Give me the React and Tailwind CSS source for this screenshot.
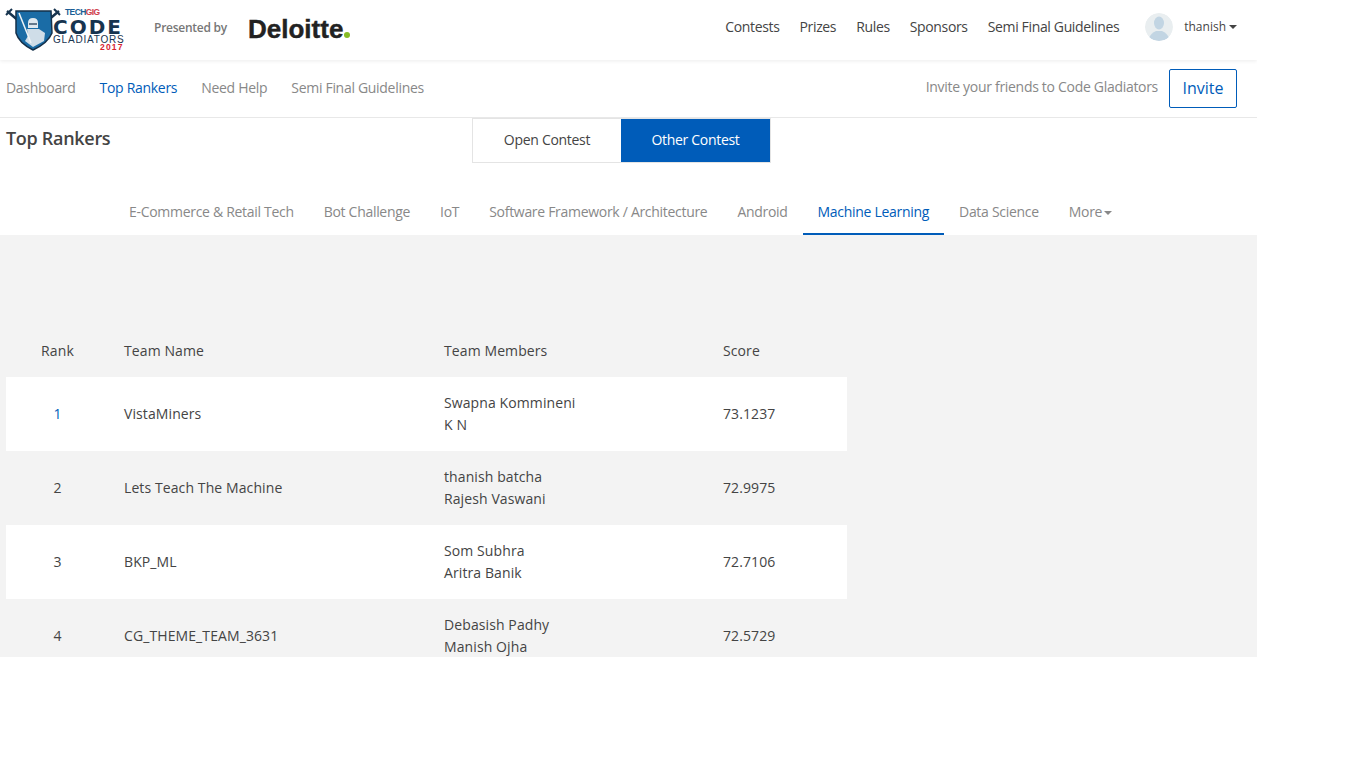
const mainNav = ['Contests', 'Prizes', 'Rules', 'Sponsors', 'Semi Final Guidelines'];
const subNav = ['Dashboard', 'Top Rankers', 'Need Help', 'Semi Final Guidelines'];
const tabs = ['E-Commerce & Retail Tech', 'Bot Challenge', 'IoT', 'Software Framework / Architecture', 'Android', 'Machine Learning', 'Data Science'];
const teams = [
  { rank: 1, name: 'VistaMiners', members: ['Swapna Kommineni', 'K N'], score: '73.1237' },
  { rank: 2, name: 'Lets Teach The Machine', members: ['thanish batcha', 'Rajesh Vaswani'], score: '72.9975' },
  { rank: 3, name: 'BKP_ML', members: ['Som Subhra', 'Aritra Banik'], score: '72.7106' },
  { rank: 4, name: 'CG_THEME_TEAM_3631', members: ['Debasish Padhy', 'Manish Ojha'], score: '72.5729' },
];

function Logo() {
  return (
    <div className="relative w-[130px] h-[52px] self-start font-['Liberation_Sans',sans-serif]">
      <svg className="absolute left-0 top-0" width="64" height="52" viewBox="0 0 64 52">
        {/* crossed swords behind the shield */}
        <path d="M7 11 L20 22 M59 11 L46 22" stroke="#17344f" strokeWidth="2.5" />
        <path d="M6 15 L12 9 M60 15 L54 9" stroke="#17344f" strokeWidth="2" />
        <path d="M16 11 L51 11 L52 33 Q48 43 33 50 Q19 43 16 33 Z" fill="#1a6ca6" stroke="#14304a" strokeWidth="1.5" />
        <path d="M28 23 Q28 18 33 18 Q38 18 38 23 L38 28 L28 28 Z" fill="#dfe8ef" />
        <path d="M27 29 L39 29 L45 33 L44 41 L33 47 L25 41 L28 36 Z" fill="#cfdde8" />
        <path d="M29 24 L37 24" stroke="#14304a" strokeWidth="1.2" />
        <path d="M19 13 L31 43" stroke="#eef3f6" strokeWidth="1.5" />
      </svg>
      <span className="absolute left-[65px] top-[8px] text-[8.5px] leading-[9px] font-bold tracking-[-0.6px] text-[#1b5f96]">TECH<span className="text-[#d0404c]">GIG</span></span>
      <span className="absolute left-[53px] top-[19px] text-[20px] leading-[16px] font-bold tracking-[2px] text-[#17344f] font-['DejaVu_Sans',sans-serif]">CODE</span>
      <span className="absolute left-[53px] top-[36px] text-[10px] leading-[8px] tracking-[0.8px] text-[#17344f]">GLADIATORS</span>
      <span className="absolute left-[100px] top-[44px] text-[8.5px] leading-[7px] font-bold tracking-[1.2px] text-[#d8232f]">2017</span>
    </div>
  );
}

function Avatar() {
  return (
    <svg width="28" height="28" viewBox="0 0 28 28" className="rounded-full">
      <circle cx="14" cy="14" r="14" fill="#e9eef0" />
      <ellipse cx="14" cy="10" rx="5" ry="6.5" fill="#c2d5e3" />
      <path d="M4 25 Q6 20 11 18 L17 18 Q22 20 24 25 Q14 31 4 25 Z" fill="#c2d5e3" />
    </svg>
  );
}

export default function App() {
  return (
    <div className="w-[1257px] h-[657px] overflow-hidden bg-[#f3f3f3] text-[#444] text-sm font-['Open_Sans',sans-serif]">
      <header className="h-[60px] bg-white flex items-center shadow-[0_1px_4px_rgba(0,0,0,0.08)] relative pb-[6px] tracking-[-0.35px]">
        <Logo />
        <span className="ml-[24px] mt-[2px] text-xs font-semibold tracking-[-0.25px] text-[#777]">Presented by</span>
        <span className="ml-[21px] mt-[4px] flex items-end text-[26px] leading-[30px] font-bold tracking-normal text-[#222] [-webkit-text-stroke:0.4px_#222] font-['Liberation_Sans',sans-serif]">
          Deloitte
          <span className="w-[6px] h-[6px] mb-[6px] ml-[1px] rounded-full bg-[#86bc25]" />
        </span>
        <nav className="ml-auto flex items-center gap-5">
          {mainNav.map((item) => <a key={item}>{item}</a>)}
        </nav>
        <div className="ml-[26px] mr-5 flex items-center tracking-normal">
          <Avatar />
          <span className="ml-[11px] text-xs">thanish</span>
          <span className="ml-[3px] w-0 h-0 border-x-4 border-x-transparent border-t-4 border-t-[#444]" />
        </div>
      </header>
      <div className="h-[58px] bg-white border-b border-[#e8e8e8] flex items-center pl-[6px] pr-5 tracking-[-0.3px]">
        <div className="flex gap-6 pb-[2px] text-[#888]">
          {subNav.map((item) => <a key={item} className={item === 'Top Rankers' ? 'text-[#005cb9]' : ''}>{item}</a>)}
        </div>
        <span className="ml-auto pb-[3px] text-[#888]">Invite your friends to Code Gladiators</span>
        <button className="ml-[11px] w-[68px] h-[39px] pb-[2px] border border-[#005cb9] rounded-[2px] text-[#005cb9] text-base tracking-normal">Invite</button>
      </div>
      <div className="h-[117px] bg-white tracking-[-0.3px]">
        <div className="flex">
          <h1 className="w-[472px] pl-[6px] pt-[6px] text-lg font-semibold text-[#444]">Top Rankers</h1>
          <div className="flex border border-[#e4e4e4] h-[45px]">
            <button className="w-[148px] pb-[2px]">Open Contest</button>
            <button className="w-[149px] pb-[2px] bg-[#005cb9] text-white font-medium">Other Contest</button>
          </div>
        </div>
        <div className="mt-[27px] ml-[114px] flex h-[45px] text-[#888]">
          {tabs.map((tab) => (
            <a key={tab} className={`px-[15px] pt-[12px] ${tab === 'Machine Learning' ? 'text-[#005cb9] border-b-2 border-[#005cb9]' : ''}`}>{tab}</a>
          ))}
          <a className="px-[15px] pt-[12px] flex items-start gap-[2px]">More<span className="mt-[9px] w-0 h-0 border-x-4 border-x-transparent border-t-4 border-t-[#888]" /></a>
        </div>
      </div>
      <div className="h-[422px] overflow-hidden pt-[97px] pl-[6px]">
        <table className="w-[841px] table-fixed border-collapse tracking-[0.1px]">
          <thead>
            <tr className="h-[45px] text-left">
              <th className="w-[103px] pb-[8px] font-normal text-center">Rank</th>
              <th className="w-[15px]" />
              <th className="w-[320px] pb-[8px] font-normal">Team Name</th>
              <th className="w-[279px] pb-[8px] font-normal">Team Members</th>
              <th className="pb-[8px] font-normal">Score</th>
            </tr>
          </thead>
          <tbody>
            {teams.map((team) => (
              <tr key={team.rank} className={`h-[74px] ${team.rank % 2 ? 'bg-white' : ''}`}>
                <td className={`text-center ${team.rank === 1 ? 'text-[#005cb9]' : ''}`}>{team.rank}</td>
                <td />
                <td>{team.name}</td>
                <td className="leading-[22px]">{team.members.map((m) => <div key={m}>{m}</div>)}</td>
                <td>{team.score}</td>
              </tr>
            ))}
          </tbody>
        </table>
      </div>
    </div>
  );
}
